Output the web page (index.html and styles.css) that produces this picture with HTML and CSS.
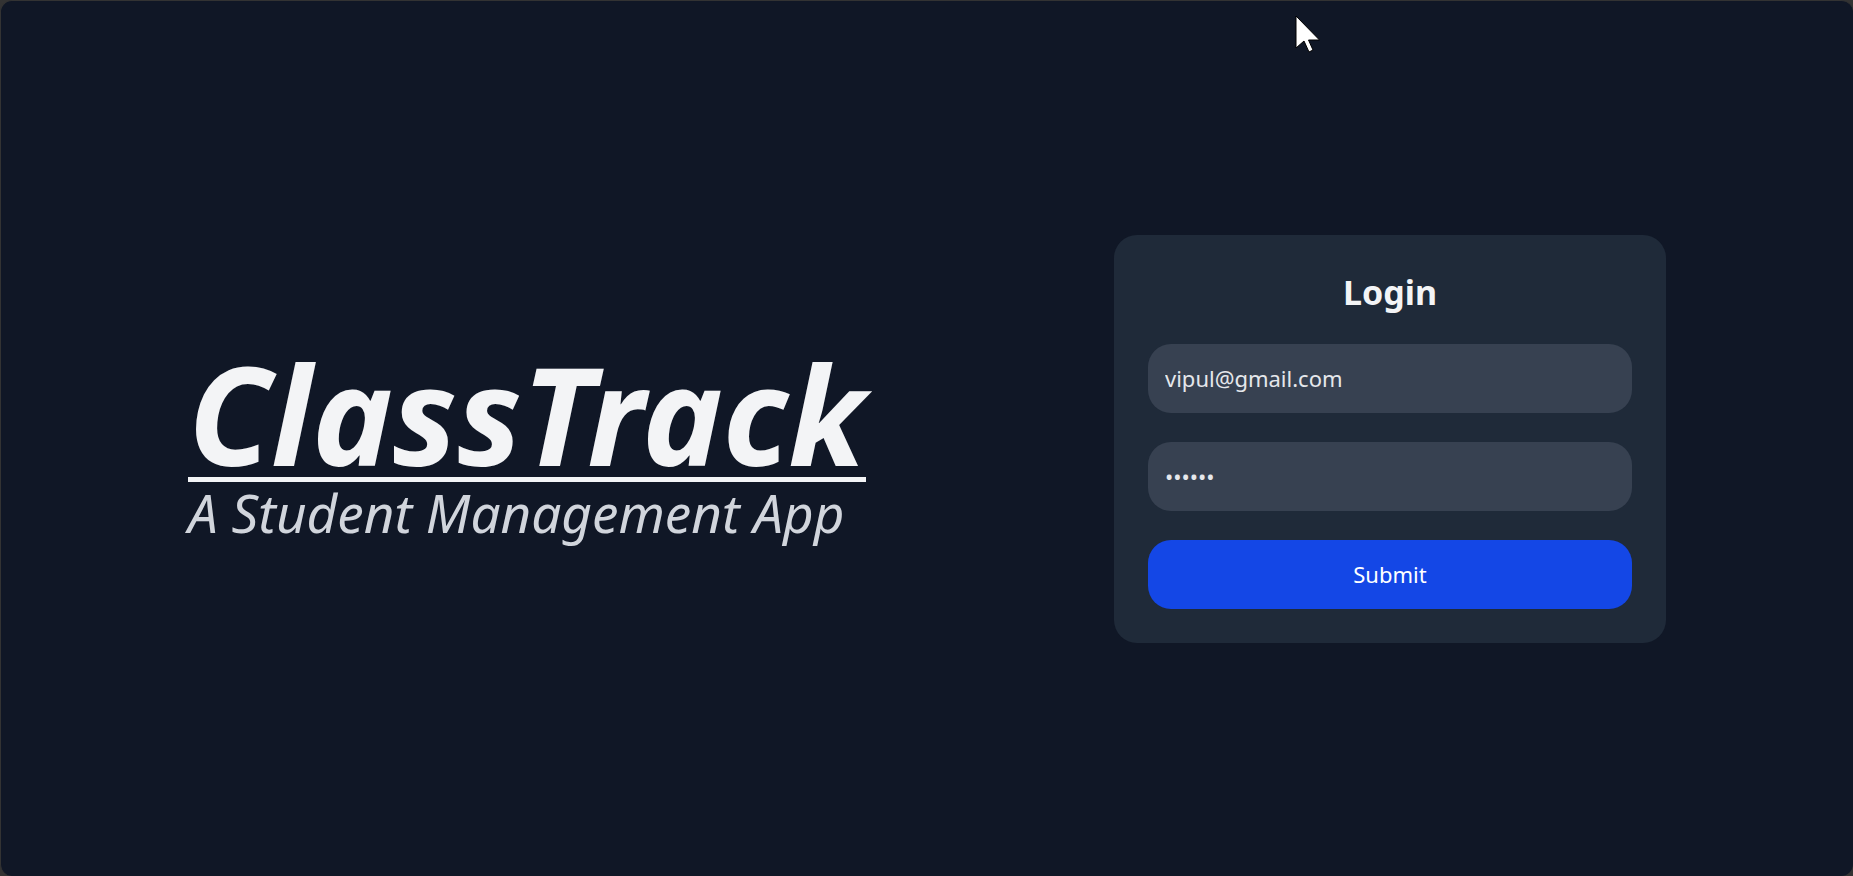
FILE: index.html
```html
<!DOCTYPE html>
<html lang="en">
<head>
<meta charset="utf-8">
<meta name="viewport" content="width=device-width, initial-scale=1">
<title>ClassTrack</title>
<link rel="stylesheet" href="styles.css">
</head>
<body>
<main class="page">
  <section class="brand">
    <h1 class="brand-name">ClassTrack</h1>
    <p class="brand-tagline">A Student Management App</p>
  </section>
  <section class="login">
    <form class="card">
      <h2 class="card-title">Login</h2>
      <input class="field" type="email" aria-label="Email" value="vipul@gmail.com">
      <input class="field" type="password" aria-label="Password" value="123456">
      <button class="submit" type="button">Submit</button>
    </form>
  </section>
</main>
<svg class="pointer" width="26" height="40" viewBox="0 0 26 40" aria-hidden="true">
  <path d="M1 1V33L9 26L14 37L18 35L13.500 25H24.500Z" fill="#fff" stroke="#000" stroke-linejoin="round"/>
</svg>
</body>
</html>
```
FILE: styles.css
```css
* {
  box-sizing: border-box;
}

body {
  margin: 0;
  background: #333333;
  color: #f3f4f6;
  font-family: "Noto Sans", "Open Sans", sans-serif;
}

.page {
  display: grid;
  grid-template-columns: 1fr 1fr;
  align-items: center;
  min-height: 100vh;
  border: 1px solid #333333;
  border-width: 1px 0 0 1px;
  border-radius: 12px;
  background: #101726;
}

.brand {
  padding-left: 187px;
  padding-top: 18px;
  font-style: italic;
  white-space: nowrap;
}

.brand-name {
  width: fit-content;
  margin: 0;
  border-bottom: 5px solid #f3f4f6;
  font-size: 136px;
  font-weight: 700;
  line-height: 126px;
}

.brand-tagline {
  margin: 0;
  color: #d1d5dc;
  font-size: 53px;
  line-height: 62px;
}

.login {
  display: flex;
  justify-content: center;
}

.card {
  display: flex;
  flex-direction: column;
  gap: 29px;
  width: 60%;
  max-width: 552px;
  padding: 34px;
  border-radius: 23px;
  background: #1f2a39;
}

.card-title {
  margin: 0;
  font-size: 34px;
  font-weight: 700;
  line-height: 46px;
  text-align: center;
}

.field,
.submit {
  width: 100%;
  height: 69px;
  padding: 0 17px;
  border: 0;
  border-radius: 23px;
  font-family: inherit;
  font-size: 22px;
}

.field {
  background: #374151;
  color: #e5e7eb;
}

.submit {
  background: #1447e6;
  color: #ffffff;
}

.pointer {
  position: absolute;
  top: 15px;
  left: 1295px;
}
```
